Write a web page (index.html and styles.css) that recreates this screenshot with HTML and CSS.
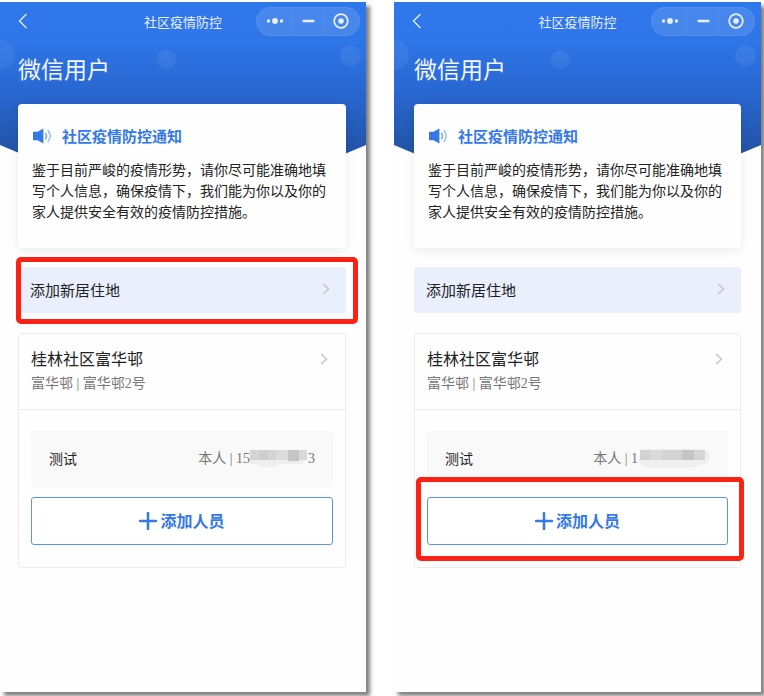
FILE: index.html
```html
<!DOCTYPE html>
<html lang="zh-CN">
<head>
<meta charset="utf-8">
<meta name="viewport" content="width=device-width, initial-scale=1">
<title>社区疫情防控</title>
<link rel="stylesheet" href="styles.css">
</head>
<body>
<svg class="defs" width="0" height="0" aria-hidden="true">
  <symbol id="back" viewBox="0 0 10 16"><path d="M8.500 1 1.500 8l7 7" fill="none" stroke="currentColor" stroke-width="1.300"/></symbol>
  <symbol id="chevron" viewBox="0 0 8 12"><path d="M1.200 1 6.500 6l-5.300 5" fill="none" stroke="currentColor" stroke-width="1.600"/></symbol>
  <symbol id="more" viewBox="0 0 18 8"><circle cx="2.500" cy="4" r="1.700"/><circle cx="9" cy="4" r="2.900"/><circle cx="15.500" cy="4" r="1.700"/></symbol>
  <symbol id="minus" viewBox="0 0 13 4"><rect x="0.500" y="0.700" width="12" height="2.600" rx="1"/></symbol>
  <symbol id="target" viewBox="0 0 16 16"><circle cx="8" cy="8" r="6.800" fill="none" stroke="currentColor" stroke-width="1.700"/><circle cx="8" cy="8" r="2.800"/></symbol>
  <symbol id="speaker" viewBox="0 0 20 16"><path d="M1.600 3.800h4L11.400.500v15L5.600 12.200h-4a.6.6 0 0 1-.6-.6V4.400a.6.6 0 0 1 .6-.6Z"/><path d="M13.300 4.800q2.400 3.200 0 6.400" fill="none" stroke="currentColor" stroke-width="1.400" opacity=".7"/><path d="M15.800 2.300q4.800 5.700 0 11.400" fill="none" stroke="currentColor" stroke-width="1.400" opacity=".5"/></symbol>
  <symbol id="plus" viewBox="0 0 18 18"><path d="M9 1v16M1 9h16" fill="none" stroke="currentColor" stroke-width="2.500" stroke-linecap="round"/></symbol>
</svg>

<main class="screens">
  <section class="phone phone-first">
    <div class="backdrop"><i class="bubble bubble-left"></i><i class="bubble bubble-mid"></i><i class="bubble bubble-right"></i></div>
    <header class="navbar">
      <button class="back" type="button" aria-label="返回"><svg width="10" height="16"><use href="#back"/></svg></button>
      <h1 class="nav-title">社区疫情防控</h1>
      <div class="capsule">
        <button type="button" aria-label="更多"><svg width="18" height="8"><use href="#more"/></svg></button>
        <button type="button" aria-label="最小化"><svg width="13" height="4"><use href="#minus"/></svg></button>
        <button type="button" aria-label="关闭"><svg width="16" height="16"><use href="#target"/></svg></button>
      </div>
    </header>
    <div class="content">
      <p class="user">微信用户</p>
      <article class="notice">
        <h2><svg width="20" height="16"><use href="#speaker"/></svg>社区疫情防控通知</h2>
        <p>鉴于目前严峻的疫情形势，请你尽可能准确地填写个人信息，确保疫情下，我们能为你以及你的家人提供安全有效的疫情防控措施。</p>
      </article>
      <div class="marked">
        <a class="add-home" href="#">添加新居住地<svg class="chevron" width="8" height="12"><use href="#chevron"/></svg></a>
        <span class="mark mark-home"></span>
      </div>
      <article class="home">
        <a class="home-head" href="#">
          <span class="home-text"><strong>桂林社区富华邨</strong><span class="address">富华邨 | 富华邨2号</span></span>
          <svg class="chevron" width="8" height="12"><use href="#chevron"/></svg>
        </a>
        <div class="members">
          <div class="member">
            <span>测试</span>
            <span class="phone-number">本人 | 15<svg width="58" height="20" viewBox="0 0 58 20"><path d="M0 2h56q2 5 0 9l-4 5H30l-6 3H12l-6-3H0Z" fill="#eee"/><path d="M0 2h26v10H0z" fill="#d5d5d5"/><path d="M9 2h9v10H9z" fill="#cecece"/><path d="M26 2h12v10H26z" fill="#dcdcdc"/><path d="M38 2h11v11H38z" fill="#c5c5c5"/><path d="M49 2h8v10h-8z" fill="#d9d9d9"/></svg>3</span>
          </div>
          <div class="marked">
            <button class="add-person" type="button"><svg width="18" height="18"><use href="#plus"/></svg>添加人员</button>
          </div>
        </div>
      </article>
    </div>
  </section>

  <section class="phone">
    <div class="backdrop"><i class="bubble bubble-left"></i><i class="bubble bubble-mid"></i><i class="bubble bubble-right"></i></div>
    <header class="navbar">
      <button class="back" type="button" aria-label="返回"><svg width="10" height="16"><use href="#back"/></svg></button>
      <h1 class="nav-title">社区疫情防控</h1>
      <div class="capsule">
        <button type="button" aria-label="更多"><svg width="18" height="8"><use href="#more"/></svg></button>
        <button type="button" aria-label="最小化"><svg width="13" height="4"><use href="#minus"/></svg></button>
        <button type="button" aria-label="关闭"><svg width="16" height="16"><use href="#target"/></svg></button>
      </div>
    </header>
    <div class="content">
      <p class="user">微信用户</p>
      <article class="notice">
        <h2><svg width="20" height="16"><use href="#speaker"/></svg>社区疫情防控通知</h2>
        <p>鉴于目前严峻的疫情形势，请你尽可能准确地填写个人信息，确保疫情下，我们能为你以及你的家人提供安全有效的疫情防控措施。</p>
      </article>
      <div class="marked">
        <a class="add-home" href="#">添加新居住地<svg class="chevron" width="8" height="12"><use href="#chevron"/></svg></a>
      </div>
      <article class="home">
        <a class="home-head" href="#">
          <span class="home-text"><strong>桂林社区富华邨</strong><span class="address">富华邨 | 富华邨2号</span></span>
          <svg class="chevron" width="8" height="12"><use href="#chevron"/></svg>
        </a>
        <div class="members">
          <div class="member">
            <span>测试</span>
            <span class="phone-number">本人 | 1<svg width="72" height="20" viewBox="0 0 72 20"><path d="M3 1h62q6 1 7 8-1 7-7 7l-12 4H13Q2 20 1 12Z" fill="#efefef"/><path d="M2 2h10v10H2z" fill="#d2d2d2"/><path d="M12 2h12v10H12z" fill="#dadada"/><path d="M24 2h20v10H24z" fill="#d3d3d3"/><path d="M44 2h12v10H44z" fill="#c5c5c5"/><path d="M56 2h11v10H56z" fill="#d5d5d5"/></svg></span>
          </div>
          <div class="marked">
            <button class="add-person" type="button"><svg width="18" height="18"><use href="#plus"/></svg>添加人员</button>
            <span class="mark mark-person"></span>
          </div>
        </div>
      </article>
    </div>
  </section>
</main>
</body>
</html>
```
FILE: styles.css
```css
* { box-sizing: border-box; }

body {
  margin: 0;
  background: #fff;
  color: #222;
  font-family: "Noto Sans CJK SC", sans-serif;
  font-size: 14px;
  line-height: 21px;
}

h1, h2, p { margin: 0; }
a { color: inherit; text-decoration: none; }
button { padding: 0; border: 0; background: none; color: inherit; font: inherit; }
svg { display: block; flex: none; fill: currentColor; }
.defs { position: absolute; }

.screens {
  display: grid;
  grid-template-columns: 366fr 367fr;
  gap: 28px;
  min-height: 100vh;
  padding: 2px 3px 4px 0;
}

.phone {
  --edge: 20px;
  position: relative;
  background: #fefefe;
  box-shadow: 4px 4px 4px rgba(0, 0, 0, .5);
}
.phone-first { --edge: 18px; }

.backdrop {
  position: absolute;
  inset: 0 0 auto;
  height: 220px;
  overflow: hidden;
  background: linear-gradient(#2f78ec 0, #2e75e8 40px, #2864cb 100px, #2253a6 150px);
  clip-path: polygon(0 0, 100% 0, 100% 143px, 50% 100%, 0 143px);
}
.bubble {
  position: absolute;
  border-radius: 50%;
  background: rgba(255, 255, 255, .06);
}
.bubble-left { left: -15px; top: 38px; width: 30px; height: 30px; }
.bubble-mid { left: 157px; top: 48px; width: 19px; height: 19px; }
.bubble-right { right: 5px; top: 43px; width: 21px; height: 21px; }

.navbar {
  position: relative;
  display: grid;
  grid-template-columns: 1fr auto 1fr;
  align-items: center;
  height: 38px;
  padding: 0 6px;
  color: #e9effb;
}
.back { justify-self: start; padding-left: 12px; }
.nav-title { font-size: 13px; font-weight: 400; }
.capsule {
  justify-self: end;
  display: flex;
  width: 104px;
  height: 29px;
  padding: 0 2px;
  border: 1px solid rgba(255, 255, 255, .06);
  border-radius: 15px;
  background: rgba(255, 255, 255, .12);
}
.capsule button {
  flex: 1;
  display: flex;
  align-items: center;
  justify-content: center;
}
.capsule button + button { box-shadow: -1px 0 rgba(255, 255, 255, .07); }

.content { position: relative; padding: 10px 20px 0 var(--edge); }
.user {
  color: #f3f7fe;
  font-size: 23px;
  line-height: 36px;
  margin-bottom: 18px;
}

.notice {
  min-height: 144px;
  padding: 22px 14px;
  border-radius: 4px;
  background: #fefefe;
  box-shadow: 0 2px 10px rgba(0, 0, 0, .08);
}
.notice h2 {
  display: flex;
  align-items: center;
  gap: 10px;
  margin-bottom: 13px;
  color: #3478ea;
  font-size: 15px;
  font-weight: 700;
  line-height: 20px;
}

.marked { position: relative; }
.mark {
  position: absolute;
  border: 5px solid #fb2114;
  border-radius: 5px;
  pointer-events: none;
}
.mark-home { inset: -10px -12px -11px -2px; }
.mark-person { inset: -20px -16px -16px -11px; z-index: 1; }

.add-home {
  display: flex;
  align-items: center;
  justify-content: space-between;
  height: 46px;
  margin: 19px 0 20px;
  padding: 0 16px 2px 12px;
  border-radius: 3px;
  background: #e9effc;
  font-size: 15px;
}
.chevron { color: #c6c8cc; }

.home {
  border: 1px solid #ececec;
  border-radius: 4px;
}
.home-head {
  display: flex;
  justify-content: space-between;
  padding: 12px 17px 13px 12px;
  border-bottom: 1px solid #ececec;
}
.home-head .chevron { margin-top: 7px; }
.home-text { display: flex; flex-direction: column; }
.home-text strong { font-size: 16px; font-weight: 400; line-height: 25px; }
.address, .phone-number {
  color: #777;
  font-family: "Liberation Serif", "Noto Sans CJK SC", serif;
}
.address { line-height: 25px; }

.members { padding: 21px 12px 22px; }
.member {
  display: flex;
  align-items: center;
  justify-content: space-between;
  height: 56px;
  margin-bottom: 10px;
  padding: 0 18px 2px;
  border-radius: 3px;
  background: #f9f9f9;
}
.phone-number { display: flex; align-items: center; white-space: pre; }

.add-person {
  display: flex;
  align-items: center;
  justify-content: center;
  gap: 3px;
  width: 100%;
  height: 48px;
  padding-bottom: 1px;
  border: 1px solid #5b93ee;
  border-radius: 3px;
  background: #fff;
  color: #3478ea;
  font-size: 16px;
  font-weight: 700;
}
```
